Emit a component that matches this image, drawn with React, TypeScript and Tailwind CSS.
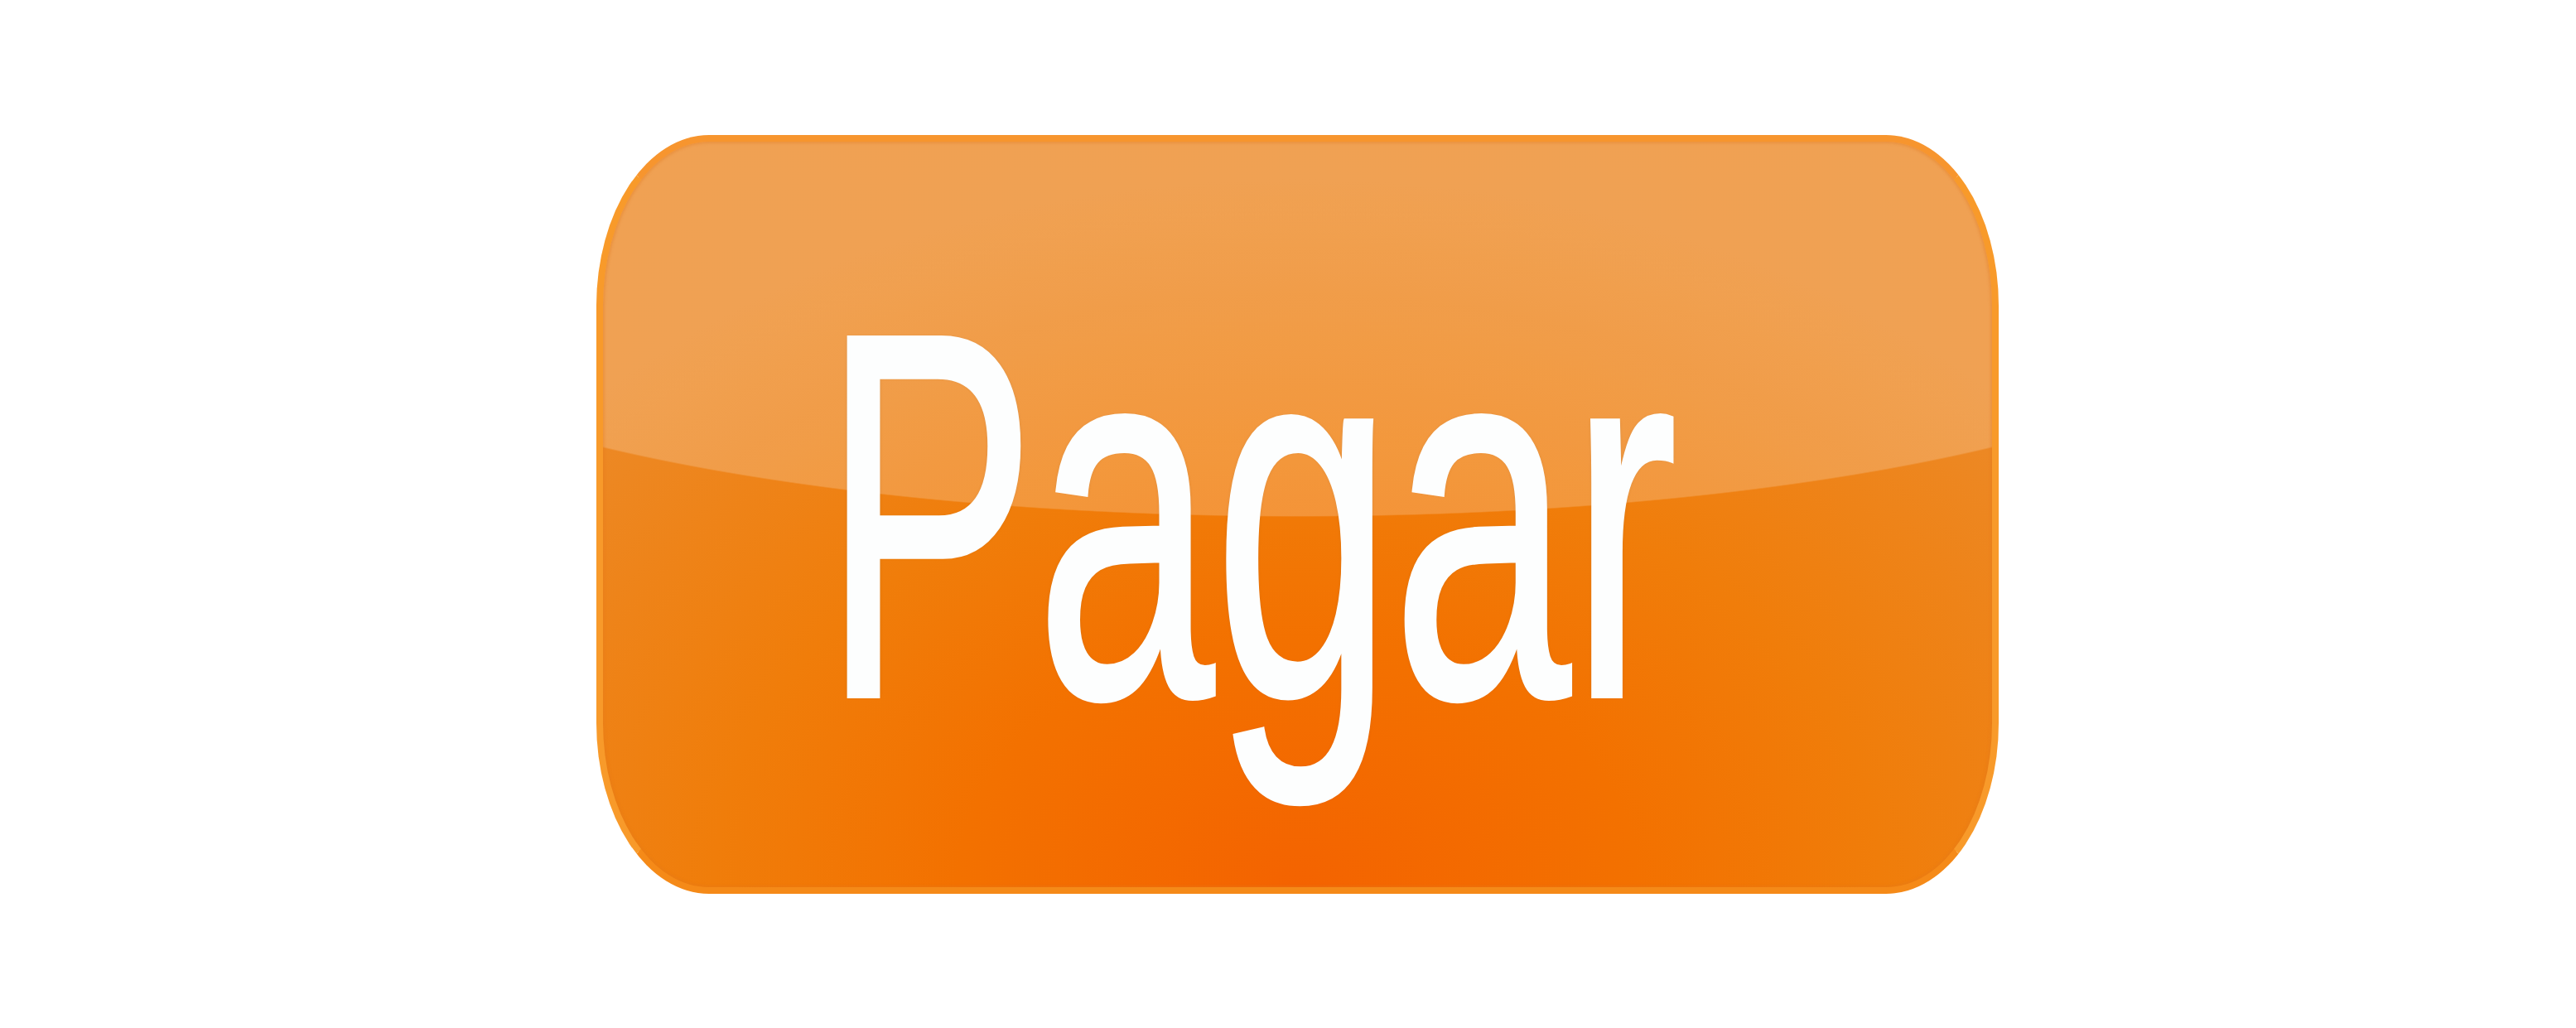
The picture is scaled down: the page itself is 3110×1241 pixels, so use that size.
import React from "react";

export default function App() {
  return (
    <div className="w-full h-[1241px] bg-white flex items-center justify-center pl-[22px]">
      <button
        type="button"
        className="w-[1693px] h-[916px] rounded-[136px/206px] border-[8px] border-[#f89a2a] border-t-[#f7952e] border-b-[#f58a18] flex items-center justify-center pr-[115px] pt-[3px] overflow-hidden shadow-[inset_0_0_3px_2px_rgba(225,120,30,0.35)] bg-[radial-gradient(1200px_292px_at_50%_161px,rgba(255,255,255,0.2)_99.5%,rgba(255,255,255,0)_100%),radial-gradient(ellipse_70%_95%_at_50%_100%,#f46300_0%,#f37100_35%,#f07d0a_60%,#ec8a28_100%)]"
      >
        <span className="inline-block scale-x-[0.616] text-[628px] leading-none text-[#fdfefe] font-['Liberation_Sans',Arial,sans-serif] [-webkit-text-stroke:6px_#fdfefe] [text-shadow:0_0_6px_rgba(110,110,110,0.45)] whitespace-nowrap">
          Pagar
        </span>
      </button>
    </div>
  );
}
